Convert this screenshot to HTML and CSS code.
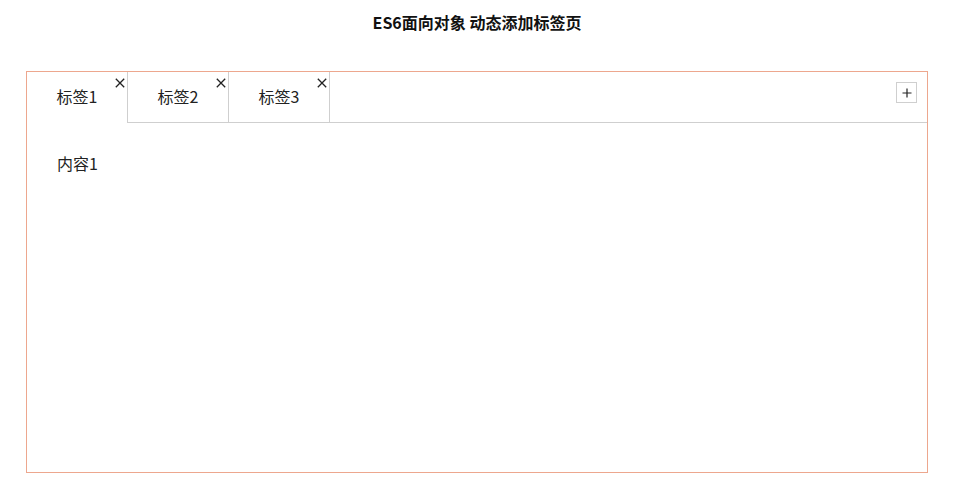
FILE: index.html
```html
<!DOCTYPE html>
<html lang="zh-CN">
<head>
<meta charset="utf-8">
<title>ES6面向对象 动态添加标签页</title>
<link rel="stylesheet" href="styles.css">
</head>
<body>
<main class="page">
  <h4 class="title">ES6面向对象 动态添加标签页</h4>
  <div class="tabsbox">
    <nav class="nav">
      <ul class="tabs">
        <li class="tab active"><span class="tab-label">标签1</span><span class="close"><svg viewBox="0 0 10 10" width="10" height="10"><path d="M0.8 0.8L9.2 9.2M9.2 0.8L0.8 9.2" stroke="#222" stroke-width="1.3" fill="none"/></svg></span></li>
        <li class="tab"><span class="tab-label">标签2</span><span class="close"><svg viewBox="0 0 10 10" width="10" height="10"><path d="M0.8 0.8L9.2 9.2M9.2 0.8L0.8 9.2" stroke="#222" stroke-width="1.3" fill="none"/></svg></span></li>
        <li class="tab"><span class="tab-label">标签3</span><span class="close"><svg viewBox="0 0 10 10" width="10" height="10"><path d="M0.8 0.8L9.2 9.2M9.2 0.8L0.8 9.2" stroke="#222" stroke-width="1.3" fill="none"/></svg></span></li>
      </ul>
      <div class="tabadd"><svg viewBox="0 0 10 10" width="10" height="10"><path d="M0.5 5H9.5M5 0.5V9.5" stroke="#222" stroke-width="1.2" fill="none"/></svg></div>
    </nav>
    <div class="content">
      <section class="panel">内容1</section>
    </div>
  </div>
</main>
</body>
</html>
```

FILE: styles.css
```css
* {
  box-sizing: border-box;
}

html, body {
  margin: 0;
  padding: 0;
  background: #fff;
}

body {
  font-family: "Noto Sans CJK SC", "Noto Sans", sans-serif;
  color: #222;
}

.page {
  width: 954px;
  padding-top: 11px;
}

.title {
  margin: 0;
  height: 60px;
  font-size: 16px;
  line-height: 22px;
  font-weight: bold;
  text-align: center;
  color: #111;
}

.tabsbox {
  width: 902px;
  height: 402px;
  margin: 0 auto;
  border: 1px solid #eda78e;
}

.nav {
  display: flex;
  align-items: flex-start;
  height: 51px;
  border-bottom: 1px solid #cfcfcf;
}

.tabs {
  display: flex;
  margin: 0;
  padding: 0;
  list-style: none;
}

.tab {
  position: relative;
  width: 101px;
  height: 50px;
  border-right: 1px solid #cfcfcf;
  background: #fff;
  text-align: center;
  line-height: 48px;
  font-size: 16px;
  color: #222;
}

.tab.active {
  height: 51px;
}

.close {
  position: absolute;
  top: 6px;
  right: 2px;
  width: 10px;
  height: 10px;
  line-height: 0;
}

.tabadd {
  display: flex;
  align-items: center;
  justify-content: center;
  width: 21px;
  height: 21px;
  margin: 10px 10px 0 auto;
  border: 1px solid #cfcfcf;
}

.tabadd svg {
  width: 10px;
  height: 10px;
}

.content {
  padding: 28px 30px;
}

.panel {
  font-size: 16px;
  line-height: 24px;
  color: #222;
}
```
